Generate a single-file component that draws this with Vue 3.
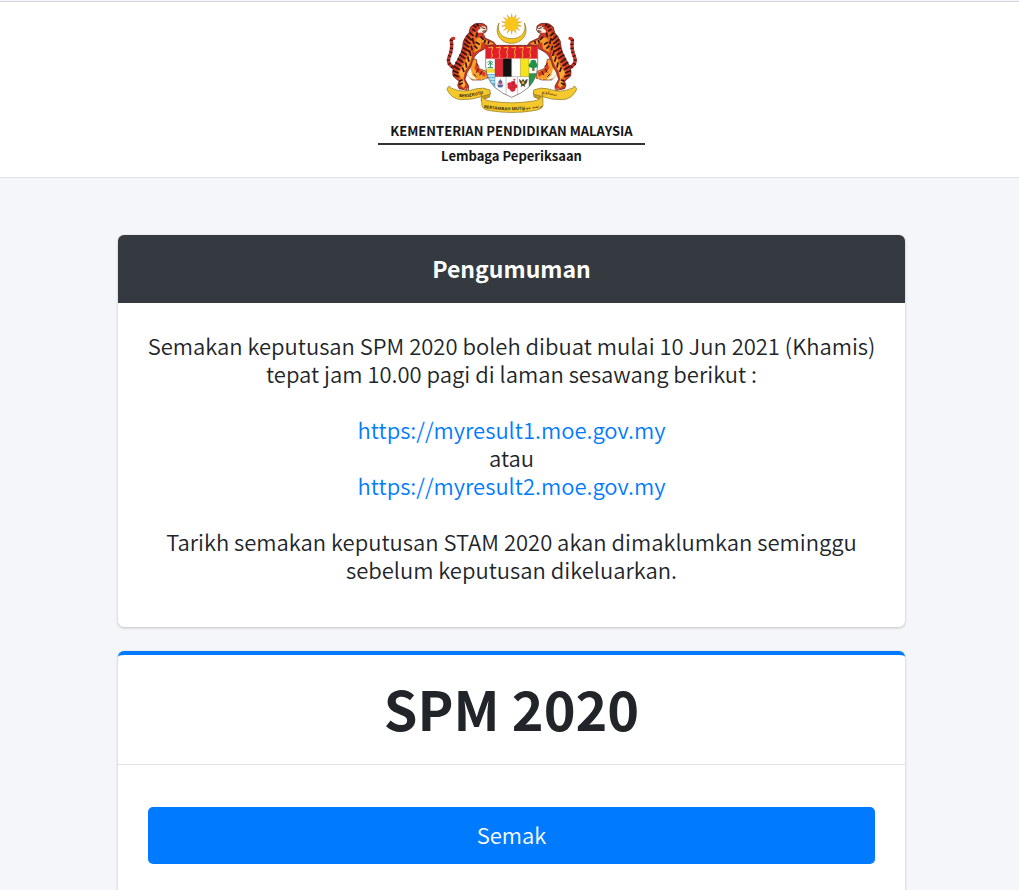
<script setup>
import { ref } from 'vue';

const title = ref('SPM 2020');

const links = [
  'https://myresult1.moe.gov.my',
  'https://myresult2.moe.gov.my'
];

const sunRays = Array.from({ length: 14 }, (_, i) => {
  const point = (radius, offset) => {
    const angle = ((i + offset) * 2 * Math.PI) / 14;
    return `${424 + radius * Math.sin(angle)},${72 - radius * Math.cos(angle)}`;
  };
  return [point(31, 0), point(17, 0.4), point(17, -0.4)].join(' ');
});

const krisX = [360, 383, 406, 429, 452, 475];
</script>

<template>
  <div class="page">
    <header class="page-header">
      <svg class="crest" viewBox="224 36 402 306" role="img" aria-label="Jata Negara Malaysia">
        <defs>
          <clipPath id="shield-clip">
            <path d="M346 136 H502 V198 Q500 236 475 262 Q452 282 424 292 Q396 282 373 262 Q348 236 346 198 Z" />
          </clipPath>
          <g id="tiger">
            <!-- tail -->
            <path d="M258 206 Q228 196 236 172 Q247 147 243 124 Q242 116 250 115" fill="none" stroke="#c8342a" stroke-width="10" stroke-linecap="round" />
            <path d="M258 206 Q228 196 236 172 Q247 147 243 124 Q242 116 250 115" fill="none" stroke="#451715" stroke-width="10" stroke-dasharray="4 8" />
            <!-- hind leg -->
            <path d="M300 176 L318 178 Q318 198 328 206 L348 214 L352 234 L334 240 L306 240 Q290 230 290 210 Z" fill="#f7a12c" stroke="#742018" stroke-width="2" />
            <path d="M298 180 Q298 202 306 226 L320 238 Q292 240 284 218 Z" fill="#fff4dd" />
            <path d="M320 182 Q320 204 334 212 L346 218 L344 230 Q322 222 312 204 Z" fill="#dc3d22" />
            <path d="M318 190 L326 200 M324 206 L318 218 M336 212 L328 226 M310 222 L318 230" stroke="#3b1514" stroke-width="3" />
            <!-- body -->
            <path d="M300 82 Q310 69 326 70 Q340 68 349 78 L350 90 Q347 99 337 101 Q344 108 344 114 L370 126 L378 136 L362 140 L348 136 L346 145 L326 156 Q312 166 306 184 Q303 202 291 216 L284 238 L295 258 L294 272 L266 266 L262 256 L266 244 L248 228 Q244 204 256 190 L272 158 Q278 142 279 124 Q286 107 296 98 Z" fill="#cc3822" stroke="#4a1613" stroke-width="2" />
            <path d="M312 90 Q324 104 322 124 Q322 146 306 154 Q300 180 288 198 L276 222 L270 246 Q258 230 262 210 L281 174 Q292 144 294 120 Z" fill="#e8621f" />
            <path d="M326 112 L352 122 L371 131 L354 136 L334 127 L331 146 L310 158 Q320 134 316 119 Z" fill="#f59a2a" />
            <path d="M306 158 Q303 190 284 214 L279 236 L286 254 L280 264 L269 254 L273 234 L264 218 Q282 200 288 178 Z" fill="#f8ab37" />
            <path d="M330 77 L345 80 L349 90 L337 98 L323 98 Q319 90 330 87 Z" fill="#f7efdf" />
            <path d="M334 83 L345 86 M336 94 L346 92 M329 78 L334 80" stroke="#46201a" stroke-width="3" />
            <path d="M310 76 L318 83 M318 72 L325 78 M306 87 L315 94 M298 98 L310 108 M289 107 L304 121 M283 118 L300 132 M281 130 L297 142 M278 143 L296 154 M273 154 L290 165 M267 164 L285 176 M262 175 L279 188 M255 187 L273 198 M250 199 L268 209 M248 212 L265 219 M250 224 L267 230 M267 244 L277 239 M266 254 L277 249 M321 98 L317 112 M316 126 L328 134 M312 137 L321 146 M306 114 L311 132 M302 137 L306 151 M297 151 L302 168 M292 170 L296 185 M286 187 L289 203 M276 202 L281 216 M331 110 L340 120 M345 120 L342 130 M356 123 L353 132" fill="none" stroke="#35100f" stroke-width="5" />
            <path d="M282 272 L286 265 M292 271 L292 265 M344 240 L344 234 M334 240 L334 235" stroke="#fff0ce" stroke-width="2" />
            <path d="M286 208 Q285 230 310 239" fill="none" stroke="#6f6260" stroke-width="1" />
          </g>
        </defs>

        <!-- crescent and star -->
        <path d="M386 69 C370 100 391 130 423 130 C456 130 478 100 462 69 C470 96 452 116 424 116 C396 116 378 96 386 69 Z" fill="#f5c51c" stroke="#8c7225" stroke-width="2" />
        <g fill="#f5bd18" stroke="#b58a20" stroke-width="1">
          <polygon v-for="ray in sunRays" :key="ray" :points="ray" />
          <circle cx="424" cy="72" r="20" fill="#fac51b" stroke="none" />
        </g>

        <use href="#tiger" />
        <use href="#tiger" transform="translate(849 0) scale(-1 1)" />

        <!-- shield -->
        <g clip-path="url(#shield-clip)">
          <rect x="344" y="134" width="160" height="160" fill="#fff" />
          <rect x="344" y="134" width="160" height="42" fill="#e31e2b" />
          <g v-for="x in krisX" :key="x" fill="none" stroke="#f0b522" stroke-width="3">
            <path :d="`M${x - 6} 143 H${x + 8} M${x + 4} 139 Q${x + 9} 145 ${x + 5} 151 Q${x + 1} 157 ${x + 5} 162 Q${x + 7} 168 ${x + 3} 174`" />
          </g>
          <rect x="374" y="176" width="24" height="54" fill="#df2933" />
          <rect x="398" y="176" width="26" height="54" fill="#111" />
          <rect x="424" y="176" width="26" height="54" fill="#fff" />
          <rect x="450" y="176" width="26" height="54" fill="#f5e31b" />
          <rect x="346" y="206" width="28" height="12" fill="#f5dc39" />
          <path d="M346 222 H374 V262 L346 230 Z" fill="#62bddf" />
          <path d="M346 228 H374 M348 237 H374 M355 246 H374" stroke="#fff" stroke-width="3" />
          <path d="M360 203 V187 M352 188 Q359 178 368 188 M354 195 L360 186 L366 195 M352 203 H368" fill="none" stroke="#278b61" stroke-width="3" />
          <path d="M476 220 H504 V242 L476 267 Z" fill="#28964b" />
          <path d="M487 196 H491 L493 212 H485 Z" fill="#6d652d" />
          <g fill="#21924a">
            <circle cx="489" cy="188" r="9" />
            <circle cx="482" cy="196" r="7" />
            <circle cx="496" cy="196" r="7" />
            <circle cx="489" cy="198" r="7" />
          </g>
          <!-- lower arms -->
          <circle cx="390" cy="254" r="10" fill="#d9deec" />
          <path d="M390 236 L393 242 L387 242 Z M384 242 H396 L394 251 H386 Z M381 254 H399 L395 262 H384 Z" fill="#5264a7" />
          <path d="M390 246 V257 M384 249 H396" stroke="#c34f58" stroke-width="2" />
          <g fill="#dc2435">
            <circle cx="418" cy="254" r="7" />
            <circle cx="428" cy="250" r="7" />
            <circle cx="434" cy="259" r="7" />
            <circle cx="427" cy="267" r="8" />
            <circle cx="418" cy="262" r="6" />
            <circle cx="432" cy="239" r="3" />
          </g>
          <path d="M425 260 L432 242 M422 258 L429 263" stroke="#8f1925" stroke-width="2" />
          <path d="M446 237 Q451 238 453 244 L458 236 L463 244 Q466 237 472 237 Q471 251 463 254 L465 261 L458 257 L451 261 L453 254 Q446 249 446 237 Z" fill="#514a33" />
          <circle cx="458" cy="248" r="4" fill="#e3b83f" />
        </g>
        <path d="M374 176 V262 M398 176 V230 M424 176 V230 M450 176 V230 M476 176 V261 M374 230 H476 M407 230 V285 M442 230 V285" fill="none" stroke="#55514f" stroke-width="1" />
        <path d="M346 136 H502 V198 Q500 236 475 262 Q452 282 424 292 Q396 282 373 262 Q348 236 346 198 Z" fill="none" stroke="#5a5655" stroke-width="2" />
        <path d="M346 137 H502" stroke="#8c2d25" stroke-width="3" />

        <!-- motto ribbon -->
        <g fill="#f5c82c" stroke="#8a7428" stroke-width="2">
          <path d="M336 278 Q351 275 360 278 L358 291 L332 302 Z" fill="#c99a20" />
          <path d="M513 278 Q498 275 489 278 L491 291 L517 302 Z" fill="#c99a20" />
          <path d="M238 258 Q230 261 230 269 Q244 297 272 299 Q307 300 336 289 L360 282 L359 270 Q338 260 314 267 Q278 280 248 266 Q237 265 238 258 Z" />
          <path d="M611 258 Q619 261 619 269 Q605 297 577 299 Q542 300 513 289 L489 282 L490 270 Q511 260 535 267 Q571 280 601 266 Q612 265 611 258 Z" />
          <path d="M332 282 Q337 301 360 303 Q424 314 489 303 Q512 301 517 282 L518 317 Q514 329 490 332 Q424 343 359 332 Q337 329 335 317 Z" />
        </g>
        <path id="motto-left" d="M266 291 Q302 294 350 277" fill="none" />
        <path id="motto-middle" d="M340 324 Q400 335 470 328" fill="none" />
        <text class="motto"><textPath href="#motto-left">BERSEKUTU</textPath></text>
        <text class="motto"><textPath href="#motto-middle">BERTAMBAH MUTU</textPath></text>
        <text class="motto jawi" x="487" y="325" transform="rotate(-8 487 325)">برتمبه موتو</text>
        <text class="motto jawi" x="537" y="283" transform="rotate(10 537 283)">برسكوتو</text>
      </svg>
      <div class="ministry">KEMENTERIAN PENDIDIKAN MALAYSIA</div>
      <div class="division">Lembaga Peperiksaan</div>
    </header>

    <main class="content">
      <section class="card">
        <h2 class="card-heading">Pengumuman</h2>
        <div class="announcement">
          <p>Semakan keputusan SPM 2020 boleh dibuat mulai 10 Jun 2021 (Khamis) tepat jam 10.00 pagi di laman sesawang berikut :</p>
          <div class="result-links">
            <a :href="links[0]">{{ links[0] }}</a>
            <span>atau</span>
            <a :href="links[1]">{{ links[1] }}</a>
          </div>
          <p>Tarikh semakan keputusan STAM 2020 akan dimaklumkan seminggu sebelum keputusan dikeluarkan.</p>
        </div>
      </section>

      <section class="card card-result">
        <h1 class="result-title">{{ title }}</h1>
        <div class="result-body">
          <button type="button" class="check-button">Semak</button>
        </div>
      </section>
    </main>
  </div>
</template>

<style>
body {
  background-color: #f4f6f9;
}
</style>

<style scoped>
.page {
  box-sizing: border-box;
  min-height: 100vh;
  padding-top: 1px;
  display: flex;
  flex-direction: column;
  font-family: "Noto Sans CJK SC", "Open Sans", sans-serif;
  font-size: 22px;
  font-weight: 350;
  line-height: 28px;
  color: #212529;
  background-color: #f4f6f9;
}

.page-header {
  box-sizing: border-box;
  display: flex;
  flex-direction: column;
  align-items: center;
  padding: 10px 0 11px 4px;
  border-top: 1px solid #d3d6da;
  border-bottom: 1px solid #dee2e6;
  background-color: #fff;
  color: #161616;
  font-weight: 700;
  font-size: 13px;
  line-height: 20px;
}

.crest {
  width: 134px;
  height: 102px;
}

.motto {
  font-family: "Open Sans", sans-serif;
  font-size: 13px;
  font-weight: 700;
  fill: #3d3010;
}

.jawi {
  font-family: "DejaVu Sans", sans-serif;
  font-weight: 400;
  text-anchor: middle;
}

.ministry {
  width: 267px;
  padding-top: 7px;
  padding-bottom: 2px;
  border-bottom: 2px solid #333;
  text-align: center;
  white-space: nowrap;
}

.division {
  padding-top: 1px;
}

.content {
  box-sizing: border-box;
  width: 100%;
  max-width: 791px;
  margin: 0 auto;
  padding: 57px 0 0 4px;
  flex: 1;
  display: flex;
  flex-direction: column;
  gap: 24px;
}

.card {
  border-radius: 6px;
  background-color: #fff;
  box-shadow: 0 0 1px rgba(0, 0, 0, 0.125), 0 1px 3px rgba(0, 0, 0, 0.2);
  text-align: center;
}

.card-heading {
  margin: 0;
  padding: 19px 20px 21px;
  border-radius: 6px 6px 0 0;
  background-color: #343a40;
  color: #fff;
  font-size: 23px;
  font-weight: 700;
}

.announcement {
  display: flex;
  flex-direction: column;
  gap: 28px;
  padding: 28px 24px 44px;
}

.announcement p {
  margin: 0;
}

.result-links {
  display: flex;
  flex-direction: column;
  align-items: center;
}

.result-links a {
  color: #007bff;
  text-decoration: none;
}

.card-result {
  flex: 1;
  border-top: 4px solid #007bff;
  border-radius: 6px 6px 0 0;
}

.result-title {
  margin: 0;
  padding: 18px 20px 22px;
  border-bottom: 1px solid #dee2e6;
  font-size: 54px;
  line-height: 69px;
  font-weight: 700;
}

.result-body {
  padding: 42px 30px;
}

.check-button {
  display: block;
  width: 100%;
  padding: 13px 14px 16px;
  border: 0;
  border-radius: 5px;
  background-color: #007bff;
  color: #fff;
  font: inherit;
  cursor: pointer;
}
</style>
